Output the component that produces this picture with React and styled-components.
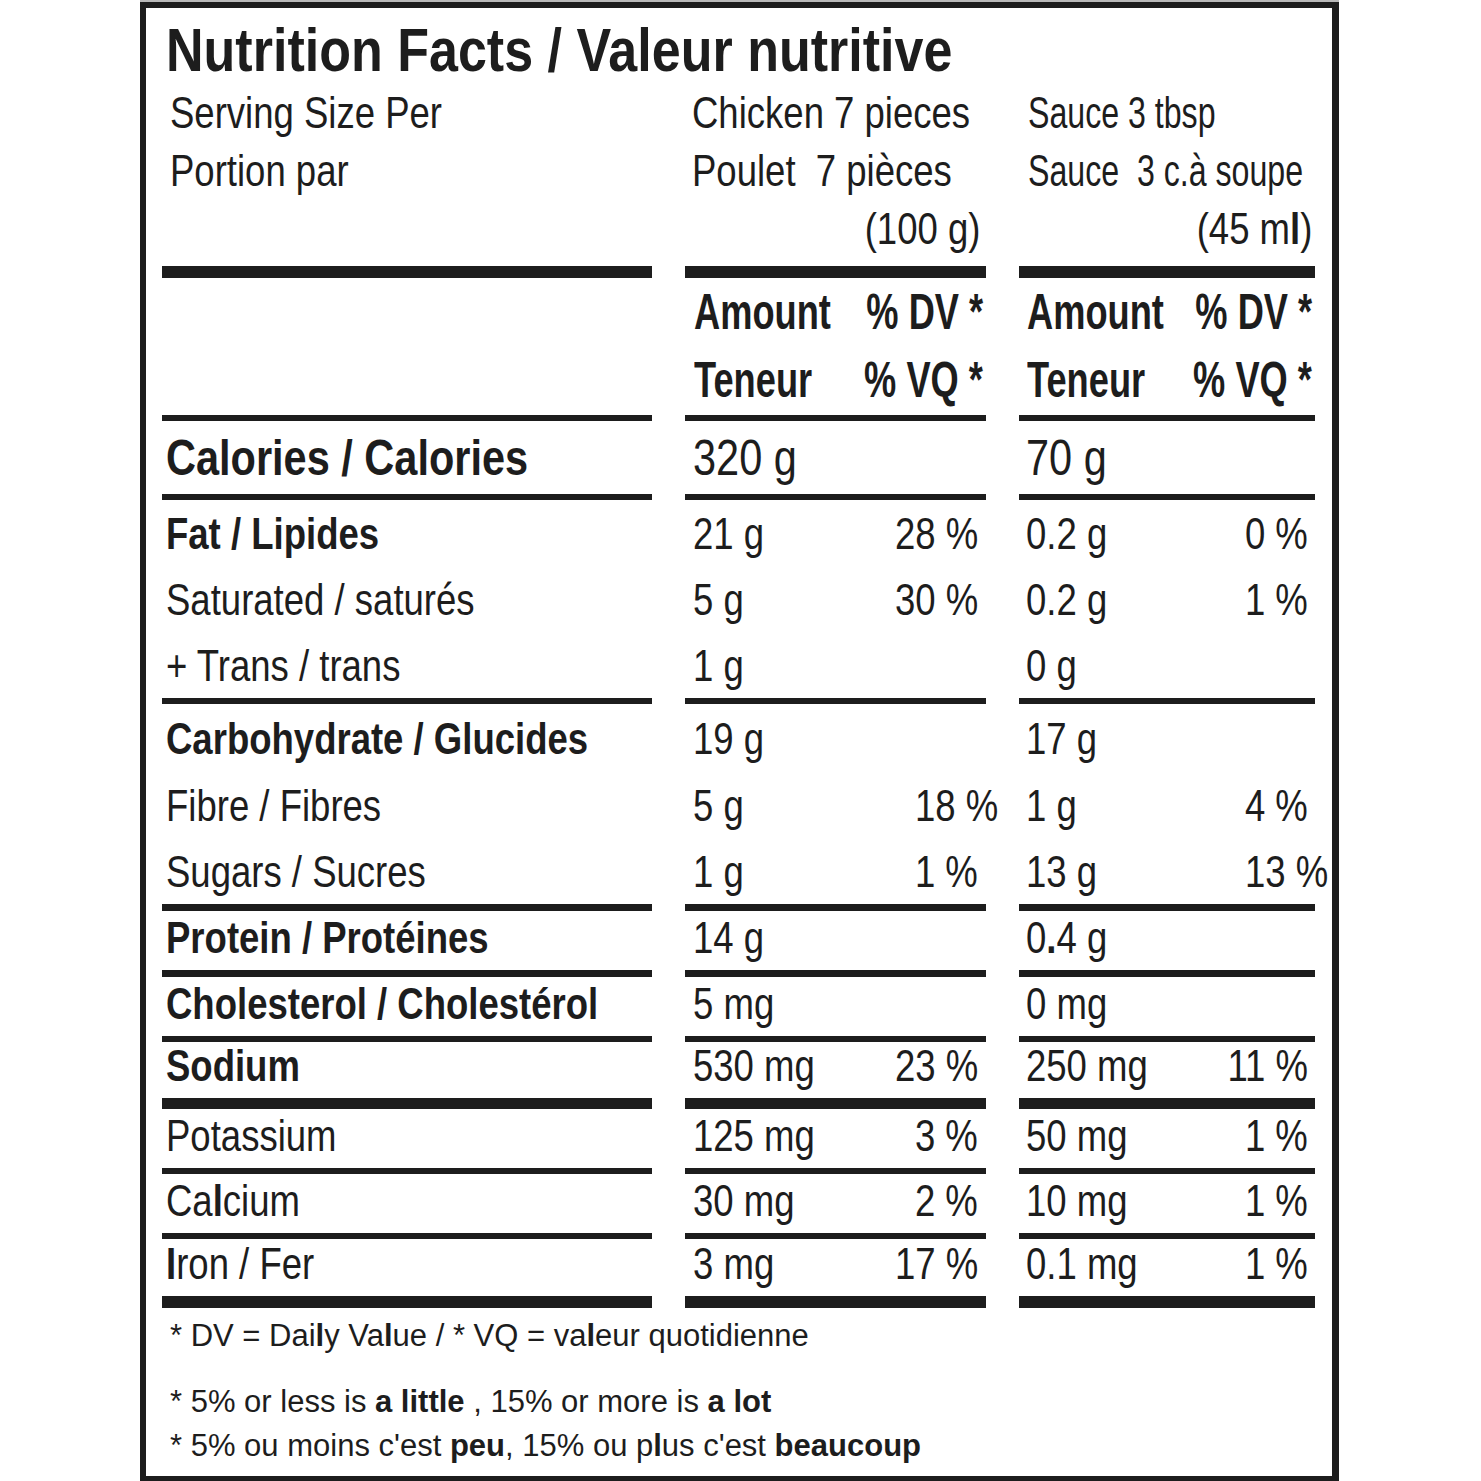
import React from 'react';
import styled, { createGlobalStyle } from 'styled-components';


const INK = '#1d1d1d';
const FONT = '"Liberation Sans", Arial, sans-serif';


const GlobalStyle = createGlobalStyle`
  html, body {
    margin: 0;
    padding: 0;
    background: #fff;
    overflow: hidden;
  }
`;

const Label = styled.div`
  box-sizing: border-box;
  width: 1199px;
  height: 1479px;
  margin: 2px 0 0 140px;
  padding: 0 17px 0 16px;
  border-style: solid;
  border-color: ${INK};
  border-width: 6px 7px 5px 6px;
  box-shadow: 0 -2px 0 #b9b9b9;
  color: ${INK};
  font-family: ${FONT};
`;

// the label is set in a condensed face; squeeze the regular one to its width
const Squeeze = styled.span`
  display: inline-block;
  white-space: pre;
  transform: scaleX(${(p) => p.$x || 0.83});
  transform-origin: ${(p) => (p.$right ? 'right' : 'left')} center;
  margin-left: ${(p) => (p.$right ? '-2em' : 0)};
`;

const Title = styled.h1`
  margin: 8px 0 0;
  padding-left: 4px;
  font-size: 61px;
  line-height: 68px;
  font-weight: 700;
  white-space: nowrap;
`;

const Grid = styled.div`
  display: grid;
  grid-template-columns: 490px 301px 296px;
  column-gap: 33px;
`;

const Cell = styled.div`
  box-sizing: border-box;
  height: ${(p) => p.$h + (p.$rule || 0)}px;
  border-bottom: ${(p) => p.$rule || 0}px solid ${INK};
  padding: 0 ${(p) => p.$pr || 0}px ${(p) => p.$pb || 0}px ${(p) => p.$pl || 0}px;
  display: flex;
  flex-direction: column;
  justify-content: ${(p) => (p.$top ? 'flex-start' : 'flex-end')};
  font-size: ${(p) => p.$size || 44}px;
  line-height: ${(p) => p.$lh || 48}px;
  font-weight: ${(p) => (p.$bold ? 700 : 400)};
  white-space: pre;
`;

const Line = styled.div`
  display: flex;
  justify-content: ${(p) => (p.$right ? 'flex-end' : 'space-between')};
  padding-right: ${(p) => p.$pr || 0}px;
`;

const Percent = styled(Squeeze)`
  margin-right: ${(p) => -(p.$nudge || 0)}px;
`;

const Heavy = styled.b`
  font-weight: 700;
`;

const Footer = styled.div`
  padding: 6px 0 0 8px;
  font-size: 31px;
  line-height: 44px;
  white-space: nowrap;
`;

const FootNote = styled.p`
  margin: 0 0 ${(p) => p.$gap || 0}px;

  b {
    font-weight: 700;
  }
`;


const nutrients = [
  { label: 'Fat / Lipides', bold: true, h: 66, chicken: ['21 g', '28 %'], sauce: ['0.2 g', '0 %'] },
  { label: 'Saturated / saturés', h: 66, chicken: ['5 g', '30 %'], sauce: ['0.2 g', '1 %'] },
  { label: '+ Trans / trans', h: 66, rule: 6, chicken: ['1 g'], sauce: ['0 g'] },
  { label: 'Carbohydrate / Glucides', bold: true, h: 67, chicken: ['19 g'], sauce: ['17 g'] },
  { label: 'Fibre / Fibres', h: 67, chicken: ['5 g', '18 %'], sauce: ['1 g', '4 %'], chickenNudge: 20 },
  { label: 'Sugars / Sucres', h: 66, rule: 7, chicken: ['1 g', '1 %'], sauce: ['13 g', '13 %'], sauceNudge: 20 },
  { label: 'Protein / Protéines', bold: true, h: 59, rule: 7, chicken: ['14 g'], sauce: [<>0<Heavy>.</Heavy>4 g</>] },
  { label: 'Cholesterol / Cholestérol', bold: true, h: 59, rule: 6, chicken: ['5 mg'], sauce: ['0 mg'] },
  { label: 'Sodium', bold: true, h: 56, rule: 11, chicken: ['530 mg', '23 %'], sauce: ['250 mg', '11 %'] },
  { label: 'Potassium', h: 59, rule: 6, chicken: ['125 mg', '3 %'], sauce: ['50 mg', '1 %'] },
  { label: <>Ca<Heavy>l</Heavy>cium</>, h: 59, rule: 6, chicken: ['30 mg', '2 %'], sauce: ['10 mg', '1 %'] },
  { label: <><Heavy>I</Heavy>ron / Fer</>, h: 57, rule: 12, chicken: ['3 mg', '17 %'], sauce: ['0.1 mg', '1 %'] },
];


const ValueCell = ({ values, h, rule, pl, pr, nudge }) => (
  <Cell $h={h} $rule={rule} $pl={pl} $pr={pr} $pb={8}>
    <Line>
      <Squeeze>{values[0]}</Squeeze>
      {values[1] && <Percent $right $nudge={nudge}>{values[1]}</Percent>}
    </Line>
  </Cell>
);

const DailyHead = ({ pl }) => (
  <Cell $h={137} $rule={6} $size={50} $lh={68} $bold $pl={pl} $pr={3} $top>
    <Line>
      <Squeeze $x={0.725}>Amount</Squeeze>
      <Squeeze $x={0.725} $right>% DV *</Squeeze>
    </Line>
    <Line>
      <Squeeze $x={0.725}>Teneur</Squeeze>
      <Squeeze $x={0.725} $right>% VQ *</Squeeze>
    </Line>
  </Cell>
);


const App = () => {
  return (
    <>
      <GlobalStyle />
      <Label>
        <Title>
          <Squeeze $x={0.853}>Nutrition Facts / Valeur nutritive</Squeeze>
        </Title>

        <Grid>
          <Cell $h={182} $rule={12} $lh={58} $pl={8} $top>
            <Squeeze>Serving Size Per</Squeeze>
            <Squeeze>Portion par</Squeeze>
          </Cell>
          <Cell $h={182} $rule={12} $lh={58} $pl={7} $top>
            <Squeeze>Chicken 7 pieces</Squeeze>
            <Squeeze>Poulet  7 pièces</Squeeze>
            <Line $right $pr={6}>
              <Squeeze $right>(100 g)</Squeeze>
            </Line>
          </Cell>
          <Cell $h={182} $rule={12} $lh={58} $pl={9} $top>
            <Squeeze $x={0.73}>Sauce 3 tbsp</Squeeze>
            <Squeeze $x={0.73}>Sauce  3 c.à soupe</Squeeze>
            <Line $right $pr={3}>
              <Squeeze $right>(45 m<Heavy>l</Heavy>)</Squeeze>
            </Line>
          </Cell>
        </Grid>

        <Grid>
          <Cell $h={137} $rule={6} />
          <DailyHead pl={9} />
          <DailyHead pl={8} />
        </Grid>

        <Grid>
          <Cell $h={73} $rule={6} $size={50} $lh={56} $pb={8} $pl={4} $bold>
            <Squeeze>Calories / Calories</Squeeze>
          </Cell>
          <Cell $h={73} $rule={6} $size={50} $lh={56} $pb={8} $pl={8}>
            <Squeeze>320 g</Squeeze>
          </Cell>
          <Cell $h={73} $rule={6} $size={50} $lh={56} $pb={8} $pl={7}>
            <Squeeze>70 g</Squeeze>
          </Cell>
        </Grid>

        {nutrients.map((row, i) => (
          <Grid key={i}>
            <Cell $h={row.h} $rule={row.rule} $pb={8} $pl={4} $bold={row.bold}>
              <Squeeze>{row.label}</Squeeze>
            </Cell>
            <ValueCell values={row.chicken} h={row.h} rule={row.rule} pl={8} pr={8} nudge={row.chickenNudge} />
            <ValueCell values={row.sauce} h={row.h} rule={row.rule} pl={7} pr={7} nudge={row.sauceNudge} />
          </Grid>
        ))}

        <Footer>
          <FootNote $gap={22}>
            * DV = Dai<Heavy>l</Heavy>y Va<Heavy>l</Heavy>ue / * VQ = va<Heavy>l</Heavy>eur quotidienne
          </FootNote>
          <FootNote>
            * 5% or less is <b>a little</b> , 15% or more is <b>a lot</b>
          </FootNote>
          <FootNote>
            * 5% ou moins c'est <b>peu</b>, 15% ou p<Heavy>l</Heavy>us c'est <b>beaucoup</b>
          </FootNote>
        </Footer>
      </Label>
    </>
  );
};


export default App;
